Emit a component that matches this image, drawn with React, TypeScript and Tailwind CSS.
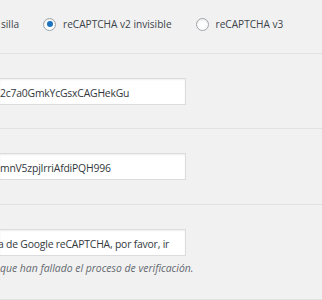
const font = { fontFamily: '"Open Sans", "Noto Sans", sans-serif' };

function Radio({ checked, label }: { checked?: boolean; label: string }) {
  return (
    <label className="flex items-center gap-[7px]">
      <span className="flex h-[13px] w-[13px] items-center justify-center rounded-full border border-[#a0a5aa] bg-white shadow-[inset_0_1px_2px_rgba(0,0,0,0.1)]">
        {checked && <span className="h-[6px] w-[6px] rounded-full bg-[#1e73be]" />}
      </span>
      <span>{label}</span>
    </label>
  );
}

function KeyInput({ value, shift }: { value: string; shift?: boolean }) {
  return (
    <div className="flex h-[27px] w-[186px] items-center border border-l-0 border-[#dcdcde] bg-white shadow-[inset_0_1px_2px_rgba(0,0,0,0.07)]">
      <div className="w-[175px] shrink-0 overflow-hidden whitespace-nowrap pt-[4px] text-[10.4px] tracking-[-0.2px] text-[#32373c]">
        <span className={shift ? "-ml-[2px] inline-block" : "inline-block"}>{value}</span>
      </div>
    </div>
  );
}

export default function App() {
  return (
    <div style={font} className="h-[300px] overflow-hidden bg-[#f1f1f1] text-[10.1px] text-[#3c434a]">
      {/* Tipo de reCAPTCHA */}
      <div className="flex h-[54px] border-b border-[#e2e2e2] pb-[4px]">
        <div className="flex items-center gap-[24px] whitespace-nowrap">
          <span className="pl-[1px]">silla</span>
          <Radio checked label="reCAPTCHA v2 invisible" />
          <Radio label="reCAPTCHA v3" />
        </div>
      </div>

      {/* Clave del sitio */}
      <div className="border-b border-[#e2e2e2] pb-[23px] pt-[24px]">
        <KeyInput value="2c7a0GmkYcGsxCAGHekGu" />
      </div>

      {/* Clave secreta */}
      <div className="border-b border-[#e2e2e2] pb-[24px] pt-[24px]">
        <KeyInput value="mnV5zpjIrriAfdiPQH996" />
      </div>

      {/* Mensaje de error */}
      <div className="h-[95px] border-b border-[#e2e2e2] pt-[24px]">
        <KeyInput shift value="a de Google reCAPTCHA, por favor, ir" />
        <p className="mt-[5px] whitespace-nowrap text-[10.4px] italic text-[#646970]">
          que han fallado el proceso de verificación.
        </p>
      </div>
    </div>
  );
}
